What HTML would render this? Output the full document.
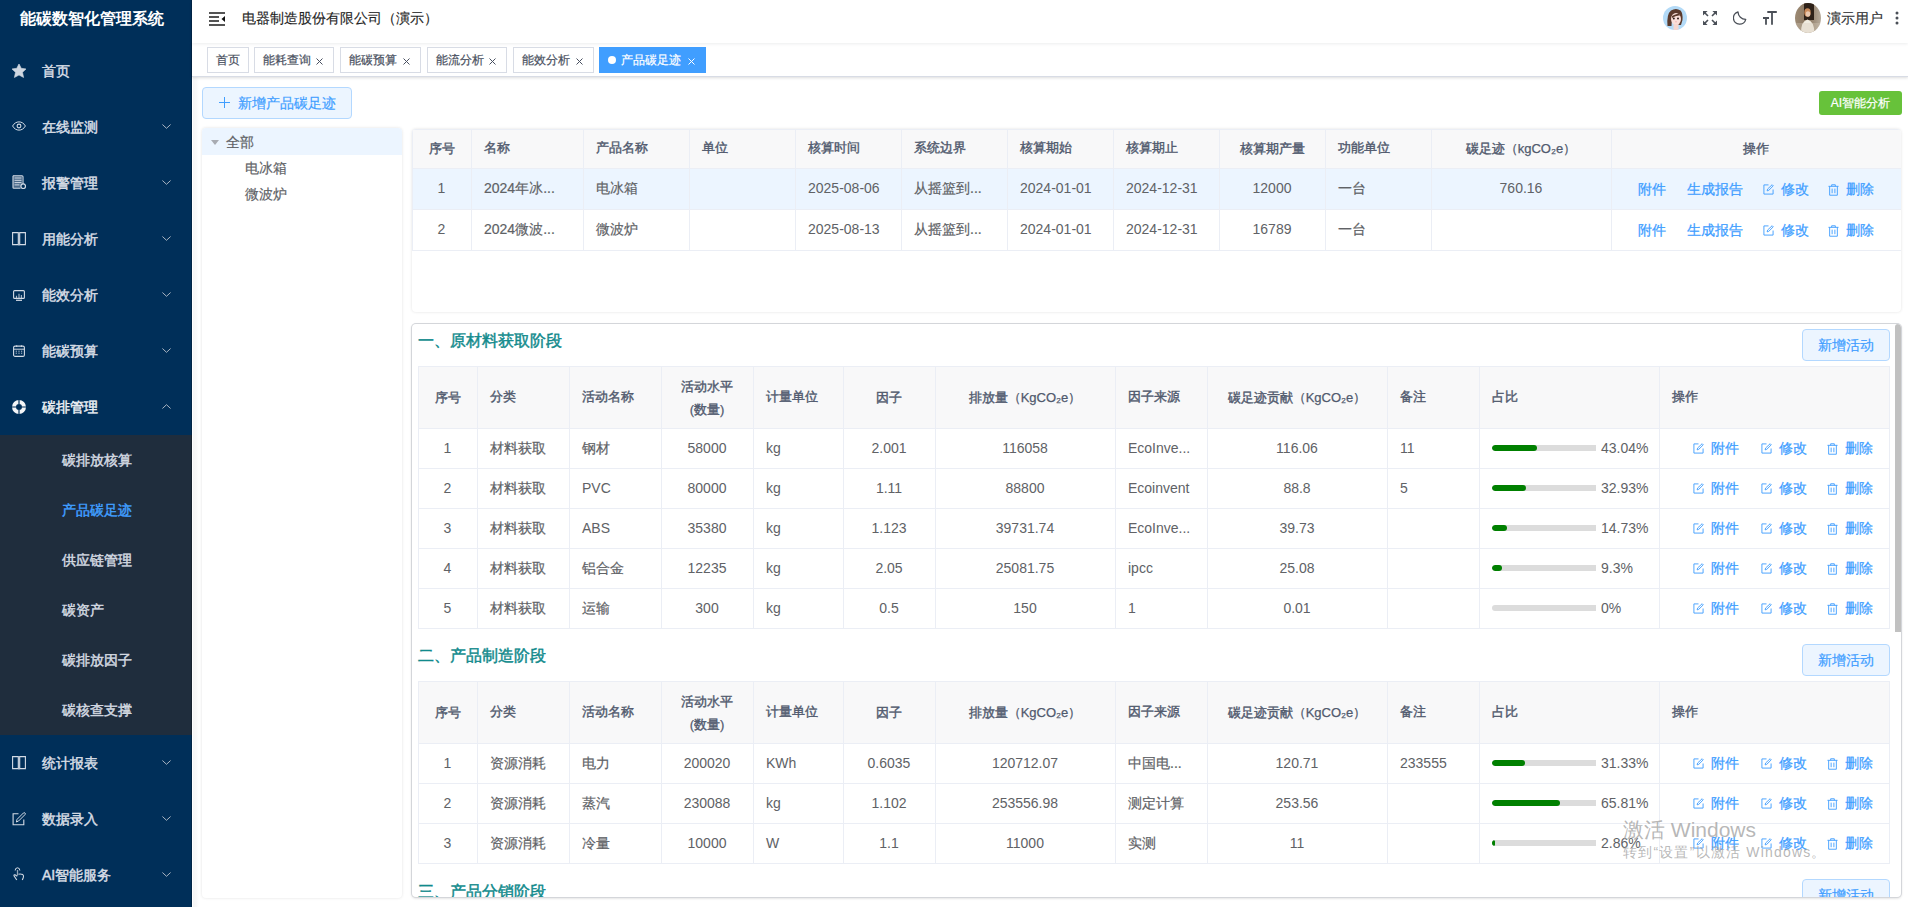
<!DOCTYPE html><html><head><meta charset="utf-8"><style>
*{box-sizing:border-box;margin:0;padding:0}
html,body{width:1908px;height:907px;overflow:hidden;background:#fff;font-family:"Liberation Sans",sans-serif;color:#606266}
.abs{position:absolute}
#side{position:absolute;left:0;top:0;width:192px;height:907px;background:#002f59;color:#bfcbd9}
#side .logo{position:absolute;left:20px;top:1px;height:43px;line-height:36px;color:#fff;font-weight:bold;font-size:16px}
.mi{position:absolute;left:0;width:192px;height:56px;line-height:56px;font-size:14px;color:#e6ecf2}
.mi .tx{-webkit-text-stroke:0.45px currentColor}
.mi .ic{position:absolute;left:12px;top:21px;width:14px;height:14px}
.mi .tx{position:absolute;left:42px;top:0}
.mi .ch{position:absolute;left:161.5px;top:25px;width:9px;height:5px}
#sub{position:absolute;left:0;top:435px;width:192px;height:300px;background:#1f2d3d}
.si{position:absolute;left:62px;height:50px;line-height:50px;font-size:14px;color:#d7dde4;-webkit-text-stroke:0.45px currentColor}
#hdr{position:absolute;left:192px;top:0;width:1716px;height:43px;background:#fff;box-shadow:0 1px 3px rgba(0,21,41,.08);z-index:3}
#tabs{position:absolute;left:192px;top:43px;width:1716px;height:34px;background:#fff;border-bottom:1px solid #d8dce5;box-shadow:0 1px 3px 0 rgba(0,0,0,.12),0 0 3px 0 rgba(0,0,0,.04);z-index:2}
.tab{position:absolute;top:4px;height:26px;line-height:25px;border:1px solid #d8dce5;font-size:12px;color:#495060;background:#fff;padding-left:8px;-webkit-text-stroke:0.2px #495060}
.tab .x{position:absolute;top:10px;width:7px;height:7px}
.tab.act{background:#409eff;border-color:#409eff;color:#fff;-webkit-text-stroke:0.2px #fff}
#main{position:absolute;left:192px;top:77px;width:1716px;height:830px;background:#fff}
.panel{position:absolute;background:#fff;border-radius:4px;box-shadow:0 0 3px rgba(0,0,0,.12)}
table{border-collapse:collapse;table-layout:fixed;font-size:14px}
td,th{border:1px solid #ebeef5;white-space:nowrap;overflow:hidden;padding:0 0 0 12px;text-align:left}
th{background:#f8f8f9;color:#515a6e;font-weight:normal;-webkit-text-stroke:0.4px #515a6e;font-size:13px;padding-bottom:2px}
td{color:#606266}
td.z{-webkit-text-stroke:0.2px #606266}
td.l{padding-bottom:2px}
.c{text-align:center;padding:0 1px 0 0}
.lt{-webkit-text-stroke:0.25px #515a6e}
.lk{color:#409eff;position:relative;top:1px;-webkit-text-stroke:0.25px #409eff}
</style></head><body>
<div id="side"><div class="logo">能碳数智化管理系统</div>
<div id="sub"></div>
<div class="mi" style="top:43px;color:#d8dee6"><svg class="ic" viewBox="0 0 14 14"><path d="M7 -0.2 L9.2 4.3 L14.2 4.9 L10.5 8.3 L11.6 13.5 L7 11 L2.4 13.5 L3.5 8.3 L-0.2 4.9 L4.8 4.3 Z" fill="#cfd7e1" stroke="#cfd7e1" stroke-width="0.6" stroke-linejoin="round"/></svg><span class="tx">首页</span></div>
<div class="mi" style="top:99px;color:#d8dee6"><svg class="ic" style="top:22px;height:10px" viewBox="0 0 14 10"><path d="M0.6 5 C3.5 -0.5 10.5 -0.5 13.4 5 C10.5 10.5 3.5 10.5 0.6 5 Z" fill="none" stroke="#d3dbe5" stroke-width="1"/><circle cx="7" cy="5" r="1.9" fill="none" stroke="#d3dbe5" stroke-width="1.1"/></svg><span class="tx">在线监测</span><svg class="ch" viewBox="0 0 9 5"><path d="M0.4 0.5 L4.5 4.3 L8.6 0.5" fill="none" stroke="#b9c2cd" stroke-width="0.9"/></svg></div>
<div class="mi" style="top:155px;color:#d8dee6"><svg class="ic" style="top:20px;height:14px" viewBox="0 0 14 14"><path d="M1 0.8 H10 Q11 0.8 11 1.8 V9 M1 0.8 V12.5 Q1 13.3 1.8 13.3 H8.5" fill="none" stroke="#d3dbe5" stroke-width="1.1"/><path d="M1 0.8 H10 V9.5 L8.5 13 H1 Z" fill="#d3dbe5" opacity="0.35"/><path d="M2.5 3 H9.5 M2.5 5.3 H9.5 M2.5 7.6 H9.5 M2.5 9.9 H7.5" stroke="#d3dbe5" stroke-width="1"/><circle cx="11.2" cy="11.2" r="2.3" fill="#002f59" stroke="#d3dbe5" stroke-width="1.2"/></svg><span class="tx">报警管理</span><svg class="ch" viewBox="0 0 9 5"><path d="M0.4 0.5 L4.5 4.3 L8.6 0.5" fill="none" stroke="#b9c2cd" stroke-width="0.9"/></svg></div>
<div class="mi" style="top:211px;color:#d8dee6"><svg class="ic" style="top:21px;height:14px" viewBox="0 0 14 14"><path d="M0.6 0.6 H6.3 V12.6 H0.6 Z M7.7 0.6 H13.4 V12.6 H7.7 Z" fill="none" stroke="#d3dbe5" stroke-width="1.1"/><path d="M7 1.3 V13.8" stroke="#d3dbe5" stroke-width="1.1" opacity="0.6"/></svg><span class="tx">用能分析</span><svg class="ch" viewBox="0 0 9 5"><path d="M0.4 0.5 L4.5 4.3 L8.6 0.5" fill="none" stroke="#b9c2cd" stroke-width="0.9"/></svg></div>
<div class="mi" style="top:267px;color:#d8dee6"><svg class="ic" style="left:13px;top:23px;width:12px;height:11px" viewBox="0 0 12 11"><rect x="0.6" y="0.6" width="10.8" height="7.8" rx="1" fill="none" stroke="#d3dbe5" stroke-width="1.1"/><path d="M3 10.3 H9" stroke="#d3dbe5" stroke-width="1.2"/><path d="M3.5 8 V5.8 M6 8 V3.8 M8.4 8 V5" stroke="#d3dbe5" stroke-width="1.1" opacity="0.8"/></svg><span class="tx">能效分析</span><svg class="ch" viewBox="0 0 9 5"><path d="M0.4 0.5 L4.5 4.3 L8.6 0.5" fill="none" stroke="#b9c2cd" stroke-width="0.9"/></svg></div>
<div class="mi" style="top:323px;color:#d8dee6"><svg class="ic" style="left:13px;top:22px;width:12px;height:12px" viewBox="0 0 12 12"><rect x="0.6" y="1.1" width="10.8" height="10.3" rx="1.5" fill="none" stroke="#d3dbe5" stroke-width="1.1"/><path d="M0.6 4.2 H11.4" stroke="#d3dbe5" stroke-width="1"/><path d="M3.7 0.3 V2 M8.4 0.3 V2" stroke="#d3dbe5" stroke-width="1"/><path d="M2.7 6.2 h1.2 M5.4 6.2 h1.2 M8 6.2 h1.2 M2.7 8.2 h1.2 M5.4 8.2 h1.2 M8 8.2 h1.2" stroke="#d3dbe5" stroke-width="0.9"/></svg><span class="tx">能碳预算</span><svg class="ch" viewBox="0 0 9 5"><path d="M0.4 0.5 L4.5 4.3 L8.6 0.5" fill="none" stroke="#b9c2cd" stroke-width="0.9"/></svg></div>
<div class="mi" style="top:379px;color:#eef1f5"><svg class="ic" style="left:12px;top:21px;width:14px;height:14px" viewBox="0 0 14 14"><circle cx="7" cy="7" r="5" fill="none" stroke="#f4f6f8" stroke-width="4"/><path d="M7 0 V4 M7 10 V14 M0 7 H4 M10 7 H14" stroke="#002f59" stroke-width="1.2"/></svg><span class="tx">碳排管理</span><svg class="ch" viewBox="0 0 9 5"><path d="M0.4 4.5 L4.5 0.7 L8.6 4.5" fill="none" stroke="#b9c2cd" stroke-width="0.9"/></svg></div>
<div class="mi" style="top:735px;color:#d8dee6"><svg class="ic" style="top:21px;height:14px" viewBox="0 0 14 14"><path d="M0.6 0.6 H6.3 V12.6 H0.6 Z M7.7 0.6 H13.4 V12.6 H7.7 Z" fill="none" stroke="#d3dbe5" stroke-width="1.1"/><path d="M7 1.3 V13.8" stroke="#d3dbe5" stroke-width="1.1" opacity="0.6"/></svg><span class="tx">统计报表</span><svg class="ch" viewBox="0 0 9 5"><path d="M0.4 0.5 L4.5 4.3 L8.6 0.5" fill="none" stroke="#b9c2cd" stroke-width="0.9"/></svg></div>
<div class="mi" style="top:791px;color:#d8dee6"><svg class="ic" style="top:20px;height:15px" viewBox="0 0 14 15"><path d="M6.5 2.8 H1.1 V13.8 H11.8 V8.5" fill="none" stroke="#d3dbe5" stroke-width="1.1"/><path d="M4.4 11 L5 8.4 L11.4 2 Q12.2 1.2 13 2 Q13.8 2.8 13 3.6 L6.6 10 Z" fill="none" stroke="#d3dbe5" stroke-width="1"/></svg><span class="tx">数据录入</span><svg class="ch" viewBox="0 0 9 5"><path d="M0.4 0.5 L4.5 4.3 L8.6 0.5" fill="none" stroke="#b9c2cd" stroke-width="0.9"/></svg></div>
<div class="mi" style="top:847px;color:#d8dee6"><svg class="ic" style="left:13px;top:20px;width:12px;height:14px" viewBox="0 0 12 14"><path d="M2.2 3.5 Q2 1 4.5 0.8 Q7 1 6.8 3.5" fill="none" stroke="#d3dbe5" stroke-width="1"/><path d="M4.5 3 V8.5" stroke="#d3dbe5" stroke-width="1.3" opacity="0.7"/><path d="M3.8 13 L1 8.8 Q0.8 7.6 2 7.8 L4.3 9.3 M5.5 7.2 Q7.5 6.5 9.8 7.6 Q11 8.5 10.3 10.5 L9.3 13" fill="none" stroke="#d3dbe5" stroke-width="1.1"/></svg><span class="tx">AI智能服务</span><svg class="ch" viewBox="0 0 9 5"><path d="M0.4 0.5 L4.5 4.3 L8.6 0.5" fill="none" stroke="#b9c2cd" stroke-width="0.9"/></svg></div>
<div class="si" style="top:435px;color:#d3d9e1">碳排放核算</div>
<div class="si" style="top:485px;color:#409eff">产品碳足迹</div>
<div class="si" style="top:535px;color:#d3d9e1">供应链管理</div>
<div class="si" style="top:585px;color:#d3d9e1">碳资产</div>
<div class="si" style="top:635px;color:#d3d9e1">碳排放因子</div>
<div class="si" style="top:685px;color:#d3d9e1">碳核查支撑</div>
<div class="abs" style="left:191px;top:0;width:1px;height:907px;background:rgba(0,0,0,.22)"></div>
</div>
<div id="hdr">
<svg class="abs" style="left:17px;top:12px" width="16" height="14" viewBox="0 0 16 14"><path d="M0 1 H16 M0 5 H10 M0 9 H10 M0 13 H16" stroke="#1c1c1c" stroke-width="1.6"/><path d="M16 4 L12.5 7 L16 10 Z" fill="#111"/></svg>
<div class="abs" style="left:50px;top:0;line-height:37px;font-size:14px;color:#1f1f1f;-webkit-text-stroke:0.15px #1f1f1f">电器制造股份有限公司（演示）</div>
<svg class="abs" style="left:1471px;top:6px" width="24" height="24" viewBox="0 0 24 24"><defs><clipPath id="ca"><circle cx="12" cy="12" r="12"/></clipPath></defs><g clip-path="url(#ca)"><rect width="24" height="24" fill="#b3daf7"/><path d="M4.5 20 Q3.5 8 8 4.5 Q13 1.5 17.5 4.5 Q20 7 19.5 14 L18 19 L15 19 Q17.5 12 15 8 Q11 10 9 12 L8.5 20 Z" fill="#5b3a2c"/><ellipse cx="13" cy="13" rx="5" ry="6" fill="#f9ded8"/><path d="M9 10 Q11 8.5 15.5 7.5 Q17.5 9 18 12 L17 9.5 Q13 9 9 12 Z" fill="#5b3a2c"/><circle cx="10.8" cy="12.6" r="1" fill="#2b1a16"/><circle cx="15" cy="12.6" r="1" fill="#2b1a16"/><path d="M12.3 15.8 h1.4" stroke="#e79a9a" stroke-width="0.8"/><rect x="10.5" y="18" width="5" height="6" fill="#f6d7cf"/></g></svg>
<svg class="abs" style="left:1511px;top:11px" width="14" height="14" viewBox="0 0 14 14"><g fill="#4a4f57"><path d="M0 0 H4.6 L0 4.6 Z M14 0 V4.6 L9.4 0 Z M0 14 V9.4 L4.6 14 Z M14 14 H9.4 L14 9.4 Z"/></g><path d="M1.5 1.5 L5 5 M12.5 1.5 L9 5 M1.5 12.5 L5 9 M12.5 12.5 L9 9" stroke="#4a4f57" stroke-width="1.6"/></svg>
<svg class="abs" style="left:1541px;top:11px" width="14" height="14" viewBox="0 0 14 14"><path d="M5 1 A6.2 6.2 0 1 0 12.7 8.3 A7.6 7.6 0 0 1 5 1 Z" fill="none" stroke="#4a4f57" stroke-width="1.3" stroke-linejoin="round"/></svg>
<svg class="abs" style="left:1571px;top:11px" width="15" height="14" viewBox="0 0 15 14"><path d="M4.3 1 H13.8 M9 1 V13.8 M0 7 H6 M3 7 V13.8" fill="none" stroke="#4a4f57" stroke-width="1.8"/></svg>
<svg class="abs" style="left:1603px;top:3px" width="26" height="30" viewBox="0 0 26 30"><defs><clipPath id="cb"><ellipse cx="13" cy="15" rx="13" ry="15"/></clipPath><linearGradient id="gb" x1="0" y1="0" x2="1" y2="0"><stop offset="0" stop-color="#9c8a74"/><stop offset="0.5" stop-color="#8a7660"/><stop offset="1" stop-color="#b7ab9b"/></linearGradient></defs><g clip-path="url(#cb)"><rect width="26" height="30" fill="url(#gb)"/><rect x="9" y="0" width="10" height="17" fill="#2e2118"/><ellipse cx="12.5" cy="9.5" rx="3.2" ry="4.2" fill="#c98a5a"/><ellipse cx="13" cy="11" rx="2.3" ry="2.8" fill="#e8c7ae"/><path d="M6 30 Q6 18 12.5 16.5 Q19 18 19.5 30 Z" fill="#f1ece0"/><rect x="0" y="20" width="26" height="10" fill="#d8ccbb" opacity="0.35"/></g></svg>
<div class="abs" style="left:1635px;top:0;line-height:36px;font-size:14px;color:#303133;-webkit-text-stroke:0.15px #303133">演示用户</div>
<svg class="abs" style="left:1703px;top:11px" width="4" height="14" viewBox="0 0 4 14"><circle cx="2" cy="2" r="1.5" fill="#4a4f57"/><circle cx="2" cy="7" r="1.5" fill="#4a4f57"/><circle cx="2" cy="12" r="1.5" fill="#4a4f57"/></svg>
</div>
<div id="tabs">
<div class="tab" style="left:15px;width:42px">首页</div>
<div class="tab" style="left:62px;width:80px">能耗查询<svg class="x" viewBox="0 0 7 7" style="left:61px"><path d="M0.5 0.5 L6.5 6.5 M6.5 0.5 L0.5 6.5" stroke="#495060" stroke-width="1"/></svg></div>
<div class="tab" style="left:148px;width:81px">能碳预算<svg class="x" viewBox="0 0 7 7" style="left:62px"><path d="M0.5 0.5 L6.5 6.5 M6.5 0.5 L0.5 6.5" stroke="#495060" stroke-width="1"/></svg></div>
<div class="tab" style="left:235px;width:80px">能流分析<svg class="x" viewBox="0 0 7 7" style="left:61px"><path d="M0.5 0.5 L6.5 6.5 M6.5 0.5 L0.5 6.5" stroke="#495060" stroke-width="1"/></svg></div>
<div class="tab" style="left:321px;width:81px">能效分析<svg class="x" viewBox="0 0 7 7" style="left:62px"><path d="M0.5 0.5 L6.5 6.5 M6.5 0.5 L0.5 6.5" stroke="#495060" stroke-width="1"/></svg></div>
<div class="tab act" style="left:407px;width:107px"><span style="display:inline-block;width:8px;height:8px;border-radius:50%;background:#fff;margin-right:5px;vertical-align:0"></span>产品碳足迹<svg class="x" viewBox="0 0 7 7" style="left:88px"><path d="M0.5 0.5 L6.5 6.5 M6.5 0.5 L0.5 6.5" stroke="#fff" stroke-width="1"/></svg></div>
</div>
<div id="main"></div>
<div class="abs" style="left:193px;top:77px;width:6px;height:830px;background:linear-gradient(90deg,#f5f5f5,#f9f9f9 60%,#fff)"></div>
<div class="abs" style="left:202px;top:87px;width:150px;height:32px;border:1px solid #b3d8ff;background:#ecf5ff;border-radius:4px;color:#409eff;font-size:14px;line-height:30px;-webkit-text-stroke:0.2px #409eff"><svg class="abs" style="left:16px;top:9px" width="11" height="11" viewBox="0 0 11 11"><path d="M5.5 0 V11 M0 5.5 H11" stroke="#409eff" stroke-width="1"/></svg><span class="abs" style="left:35px;top:0">新增产品碳足迹</span></div>
<div class="abs" style="left:1819px;top:91px;width:83px;height:24px;background:#67c23a;border-radius:3px;color:#fff;font-size:12px;line-height:24px;text-align:center;-webkit-text-stroke:0.2px #fff">AI智能分析</div>
<div class="panel" style="left:202px;top:128px;width:200px;height:770px"><div class="abs" style="left:0;top:0;width:200px;height:27px;background:#ecf5ff;border-radius:4px 4px 0 0"></div><svg class="abs" style="left:8.5px;top:12px" width="8" height="5" viewBox="0 0 8 5"><path d="M0 0 H8 L4 5 Z" fill="#a8abb2"/></svg><div class="abs" style="left:24px;top:1px;line-height:26px;font-size:14px;color:#606266;-webkit-text-stroke:0.2px #606266">全部</div><div class="abs" style="left:43px;top:27px;line-height:26px;font-size:14px;color:#606266;-webkit-text-stroke:0.2px #606266">电冰箱</div><div class="abs" style="left:43px;top:53px;line-height:26px;font-size:14px;color:#606266;-webkit-text-stroke:0.2px #606266">微波炉</div></div>
<div class="panel" style="left:412px;top:129px;width:1489px;height:183px;overflow:hidden;border-radius:4px">
<table style="position:absolute;left:0;top:0;width:1489px"><colgroup><col style="width:59px"><col style="width:112px"><col style="width:106px"><col style="width:106px"><col style="width:106px"><col style="width:106px"><col style="width:106px"><col style="width:106px"><col style="width:106px"><col style="width:106px"><col style="width:180px"><col style="width:290px"></colgroup>
<tr style="height:39px"><th class="c">序号</th><th class="">名称</th><th class="">产品名称</th><th class="">单位</th><th class="">核算时间</th><th class="">系统边界</th><th class="">核算期始</th><th class="">核算期止</th><th class="c">核算期产量</th><th class="">功能单位</th><th class="c">碳足迹<span class="lt">（kgCO₂e）</span></th><th class="c">操作</th></tr>
<tr style="height:41px;background:#ecf5ff;"><td class="c l">1</td><td class="z">2024年冰...</td><td class="z">电冰箱</td><td class=""></td><td class="l">2025-08-06</td><td class="z">从摇篮到...</td><td class="l">2024-01-01</td><td class="l">2024-12-31</td><td class="c l">12000</td><td class="z">一台</td><td class="c l">760.16</td><td class="c"><span class="lk">附件</span><span class="lk" style="margin-left:21px">生成报告</span><span class="lk" style="margin-left:20px"><svg width="11" height="11" viewBox="0 0 12 12" style="vertical-align:-1px;margin-right:7px"><path d="M6 1 H1 V11 H11 V6" fill="none" stroke="#409eff" stroke-width="1"/><path d="M4.5 7.5 L5 5.5 L10 0.8 L11.2 2 L6.3 6.9 Z" fill="none" stroke="#409eff" stroke-width="1"/></svg>修改</span><span class="lk" style="margin-left:19px"><svg width="11" height="12" viewBox="0 0 12 13" style="vertical-align:-2px;margin-right:7px"><path d="M0.5 2.5 H11.5 M4 2.5 V0.8 H8 V2.5 M1.8 2.5 V12.2 H10.2 V2.5 M4.5 5 V10 M7.5 5 V10" fill="none" stroke="#409eff" stroke-width="1"/></svg>删除</span></td></tr>
<tr style="height:41px;"><td class="c l">2</td><td class="z">2024微波...</td><td class="z">微波炉</td><td class=""></td><td class="l">2025-08-13</td><td class="z">从摇篮到...</td><td class="l">2024-01-01</td><td class="l">2024-12-31</td><td class="c l">16789</td><td class="z">一台</td><td class="c"></td><td class="c"><span class="lk">附件</span><span class="lk" style="margin-left:21px">生成报告</span><span class="lk" style="margin-left:20px"><svg width="11" height="11" viewBox="0 0 12 12" style="vertical-align:-1px;margin-right:7px"><path d="M6 1 H1 V11 H11 V6" fill="none" stroke="#409eff" stroke-width="1"/><path d="M4.5 7.5 L5 5.5 L10 0.8 L11.2 2 L6.3 6.9 Z" fill="none" stroke="#409eff" stroke-width="1"/></svg>修改</span><span class="lk" style="margin-left:19px"><svg width="11" height="12" viewBox="0 0 12 13" style="vertical-align:-2px;margin-right:7px"><path d="M0.5 2.5 H11.5 M4 2.5 V0.8 H8 V2.5 M1.8 2.5 V12.2 H10.2 V2.5 M4.5 5 V10 M7.5 5 V10" fill="none" stroke="#409eff" stroke-width="1"/></svg>删除</span></td></tr>
</table></div>
<div class="panel" style="left:412px;top:324px;width:1489px;height:573px;overflow:hidden;box-shadow:0 0 0 1px #d4d6da, 0 1px 3px rgba(0,0,0,.2)">
<div class="abs" style="left:6px;top:1px;line-height:32px;font-size:16px;color:#118a8c;-webkit-text-stroke:0.45px #118a8c">一、原材料获取阶段</div>
<div class="abs" style="left:1390px;top:5px;width:88px;height:32px;border:1px solid #b3d8ff;background:#ecf5ff;border-radius:4px;color:#409eff;font-size:14px;line-height:30px;text-align:center;-webkit-text-stroke:0.2px #409eff">新增活动</div>
<table style="position:absolute;left:6px;top:42px;width:1471px"><colgroup><col style="width:59px"><col style="width:92px"><col style="width:92px"><col style="width:92px"><col style="width:90px"><col style="width:92px"><col style="width:180px"><col style="width:92px"><col style="width:180px"><col style="width:92px"><col style="width:180px"><col style="width:230px"></colgroup>
<tr style="height:62px"><th class="c" style="line-height:23px">序号</th><th class="" style="line-height:23px">分类</th><th class="" style="line-height:23px">活动名称</th><th class="c" style="line-height:23px">活动水平<br><span class="lt">(</span>数量<span class="lt">)</span></th><th class="" style="line-height:23px">计量单位</th><th class="c" style="line-height:23px">因子</th><th class="c" style="line-height:23px">排放量<span class="lt">（KgCO₂e）</span></th><th class="" style="line-height:23px">因子来源</th><th class="c" style="line-height:23px">碳足迹贡献<span class="lt">（KgCO₂e）</span></th><th class="" style="line-height:23px">备注</th><th class="" style="line-height:23px">占比</th><th class="" style="line-height:23px">操作</th></tr>
<tr style="height:40px"><td class="c l">1</td><td class="z">材料获取</td><td class="z">钢材</td><td class="c l">58000</td><td class="l">kg</td><td class="c l">2.001</td><td class="c l">116058</td><td class="l">EcoInve...</td><td class="c l">116.06</td><td class="l">11</td><td style="padding-left:12px"><div style="position:relative;height:38px"><div class="abs" style="left:0;top:15px;width:104px;height:6px;border-radius:3px 0 0 3px;background:#dcdcdc;overflow:hidden"><div style="width:45px;height:6px;border-radius:3px;background:#008000"></div></div><span class="abs" style="left:109px;top:-1px;line-height:38px">43.04%</span></div></td><td style="padding:0"><span class="lk" style="margin-left:33px;top:0"><svg width="11" height="11" viewBox="0 0 12 12" style="vertical-align:-1px;margin-right:7px"><path d="M6 1 H1 V11 H11 V6" fill="none" stroke="#409eff" stroke-width="1"/><path d="M4.5 7.5 L5 5.5 L10 0.8 L11.2 2 L6.3 6.9 Z" fill="none" stroke="#409eff" stroke-width="1"/></svg>附件</span><span class="lk" style="margin-left:22px;top:0"><svg width="11" height="11" viewBox="0 0 12 12" style="vertical-align:-1px;margin-right:7px"><path d="M6 1 H1 V11 H11 V6" fill="none" stroke="#409eff" stroke-width="1"/><path d="M4.5 7.5 L5 5.5 L10 0.8 L11.2 2 L6.3 6.9 Z" fill="none" stroke="#409eff" stroke-width="1"/></svg>修改</span><span class="lk" style="margin-left:20px;top:0"><svg width="11" height="12" viewBox="0 0 12 13" style="vertical-align:-2px;margin-right:7px"><path d="M0.5 2.5 H11.5 M4 2.5 V0.8 H8 V2.5 M1.8 2.5 V12.2 H10.2 V2.5 M4.5 5 V10 M7.5 5 V10" fill="none" stroke="#409eff" stroke-width="1"/></svg>删除</span></td></tr>
<tr style="height:40px"><td class="c l">2</td><td class="z">材料获取</td><td class="l">PVC</td><td class="c l">80000</td><td class="l">kg</td><td class="c l">1.11</td><td class="c l">88800</td><td class="l">Ecoinvent</td><td class="c l">88.8</td><td class="l">5</td><td style="padding-left:12px"><div style="position:relative;height:38px"><div class="abs" style="left:0;top:15px;width:104px;height:6px;border-radius:3px 0 0 3px;background:#dcdcdc;overflow:hidden"><div style="width:34px;height:6px;border-radius:3px;background:#008000"></div></div><span class="abs" style="left:109px;top:-1px;line-height:38px">32.93%</span></div></td><td style="padding:0"><span class="lk" style="margin-left:33px;top:0"><svg width="11" height="11" viewBox="0 0 12 12" style="vertical-align:-1px;margin-right:7px"><path d="M6 1 H1 V11 H11 V6" fill="none" stroke="#409eff" stroke-width="1"/><path d="M4.5 7.5 L5 5.5 L10 0.8 L11.2 2 L6.3 6.9 Z" fill="none" stroke="#409eff" stroke-width="1"/></svg>附件</span><span class="lk" style="margin-left:22px;top:0"><svg width="11" height="11" viewBox="0 0 12 12" style="vertical-align:-1px;margin-right:7px"><path d="M6 1 H1 V11 H11 V6" fill="none" stroke="#409eff" stroke-width="1"/><path d="M4.5 7.5 L5 5.5 L10 0.8 L11.2 2 L6.3 6.9 Z" fill="none" stroke="#409eff" stroke-width="1"/></svg>修改</span><span class="lk" style="margin-left:20px;top:0"><svg width="11" height="12" viewBox="0 0 12 13" style="vertical-align:-2px;margin-right:7px"><path d="M0.5 2.5 H11.5 M4 2.5 V0.8 H8 V2.5 M1.8 2.5 V12.2 H10.2 V2.5 M4.5 5 V10 M7.5 5 V10" fill="none" stroke="#409eff" stroke-width="1"/></svg>删除</span></td></tr>
<tr style="height:40px"><td class="c l">3</td><td class="z">材料获取</td><td class="l">ABS</td><td class="c l">35380</td><td class="l">kg</td><td class="c l">1.123</td><td class="c l">39731.74</td><td class="l">EcoInve...</td><td class="c l">39.73</td><td class=""></td><td style="padding-left:12px"><div style="position:relative;height:38px"><div class="abs" style="left:0;top:15px;width:104px;height:6px;border-radius:3px 0 0 3px;background:#dcdcdc;overflow:hidden"><div style="width:15px;height:6px;border-radius:3px;background:#008000"></div></div><span class="abs" style="left:109px;top:-1px;line-height:38px">14.73%</span></div></td><td style="padding:0"><span class="lk" style="margin-left:33px;top:0"><svg width="11" height="11" viewBox="0 0 12 12" style="vertical-align:-1px;margin-right:7px"><path d="M6 1 H1 V11 H11 V6" fill="none" stroke="#409eff" stroke-width="1"/><path d="M4.5 7.5 L5 5.5 L10 0.8 L11.2 2 L6.3 6.9 Z" fill="none" stroke="#409eff" stroke-width="1"/></svg>附件</span><span class="lk" style="margin-left:22px;top:0"><svg width="11" height="11" viewBox="0 0 12 12" style="vertical-align:-1px;margin-right:7px"><path d="M6 1 H1 V11 H11 V6" fill="none" stroke="#409eff" stroke-width="1"/><path d="M4.5 7.5 L5 5.5 L10 0.8 L11.2 2 L6.3 6.9 Z" fill="none" stroke="#409eff" stroke-width="1"/></svg>修改</span><span class="lk" style="margin-left:20px;top:0"><svg width="11" height="12" viewBox="0 0 12 13" style="vertical-align:-2px;margin-right:7px"><path d="M0.5 2.5 H11.5 M4 2.5 V0.8 H8 V2.5 M1.8 2.5 V12.2 H10.2 V2.5 M4.5 5 V10 M7.5 5 V10" fill="none" stroke="#409eff" stroke-width="1"/></svg>删除</span></td></tr>
<tr style="height:40px"><td class="c l">4</td><td class="z">材料获取</td><td class="z">铝合金</td><td class="c l">12235</td><td class="l">kg</td><td class="c l">2.05</td><td class="c l">25081.75</td><td class="l">ipcc</td><td class="c l">25.08</td><td class=""></td><td style="padding-left:12px"><div style="position:relative;height:38px"><div class="abs" style="left:0;top:15px;width:104px;height:6px;border-radius:3px 0 0 3px;background:#dcdcdc;overflow:hidden"><div style="width:10px;height:6px;border-radius:3px;background:#008000"></div></div><span class="abs" style="left:109px;top:-1px;line-height:38px">9.3%</span></div></td><td style="padding:0"><span class="lk" style="margin-left:33px;top:0"><svg width="11" height="11" viewBox="0 0 12 12" style="vertical-align:-1px;margin-right:7px"><path d="M6 1 H1 V11 H11 V6" fill="none" stroke="#409eff" stroke-width="1"/><path d="M4.5 7.5 L5 5.5 L10 0.8 L11.2 2 L6.3 6.9 Z" fill="none" stroke="#409eff" stroke-width="1"/></svg>附件</span><span class="lk" style="margin-left:22px;top:0"><svg width="11" height="11" viewBox="0 0 12 12" style="vertical-align:-1px;margin-right:7px"><path d="M6 1 H1 V11 H11 V6" fill="none" stroke="#409eff" stroke-width="1"/><path d="M4.5 7.5 L5 5.5 L10 0.8 L11.2 2 L6.3 6.9 Z" fill="none" stroke="#409eff" stroke-width="1"/></svg>修改</span><span class="lk" style="margin-left:20px;top:0"><svg width="11" height="12" viewBox="0 0 12 13" style="vertical-align:-2px;margin-right:7px"><path d="M0.5 2.5 H11.5 M4 2.5 V0.8 H8 V2.5 M1.8 2.5 V12.2 H10.2 V2.5 M4.5 5 V10 M7.5 5 V10" fill="none" stroke="#409eff" stroke-width="1"/></svg>删除</span></td></tr>
<tr style="height:40px"><td class="c l">5</td><td class="z">材料获取</td><td class="z">运输</td><td class="c l">300</td><td class="l">kg</td><td class="c l">0.5</td><td class="c l">150</td><td class="l">1</td><td class="c l">0.01</td><td class=""></td><td style="padding-left:12px"><div style="position:relative;height:38px"><div class="abs" style="left:0;top:15px;width:104px;height:6px;border-radius:3px 0 0 3px;background:#dcdcdc;overflow:hidden"><div style="width:0px;height:6px;border-radius:3px;background:#008000"></div></div><span class="abs" style="left:109px;top:-1px;line-height:38px">0%</span></div></td><td style="padding:0"><span class="lk" style="margin-left:33px;top:0"><svg width="11" height="11" viewBox="0 0 12 12" style="vertical-align:-1px;margin-right:7px"><path d="M6 1 H1 V11 H11 V6" fill="none" stroke="#409eff" stroke-width="1"/><path d="M4.5 7.5 L5 5.5 L10 0.8 L11.2 2 L6.3 6.9 Z" fill="none" stroke="#409eff" stroke-width="1"/></svg>附件</span><span class="lk" style="margin-left:22px;top:0"><svg width="11" height="11" viewBox="0 0 12 12" style="vertical-align:-1px;margin-right:7px"><path d="M6 1 H1 V11 H11 V6" fill="none" stroke="#409eff" stroke-width="1"/><path d="M4.5 7.5 L5 5.5 L10 0.8 L11.2 2 L6.3 6.9 Z" fill="none" stroke="#409eff" stroke-width="1"/></svg>修改</span><span class="lk" style="margin-left:20px;top:0"><svg width="11" height="12" viewBox="0 0 12 13" style="vertical-align:-2px;margin-right:7px"><path d="M0.5 2.5 H11.5 M4 2.5 V0.8 H8 V2.5 M1.8 2.5 V12.2 H10.2 V2.5 M4.5 5 V10 M7.5 5 V10" fill="none" stroke="#409eff" stroke-width="1"/></svg>删除</span></td></tr>
</table>
<div class="abs" style="left:6px;top:316px;line-height:32px;font-size:16px;color:#118a8c;-webkit-text-stroke:0.45px #118a8c">二、产品制造阶段</div>
<div class="abs" style="left:1390px;top:320px;width:88px;height:32px;border:1px solid #b3d8ff;background:#ecf5ff;border-radius:4px;color:#409eff;font-size:14px;line-height:30px;text-align:center;-webkit-text-stroke:0.2px #409eff">新增活动</div>
<table style="position:absolute;left:6px;top:357px;width:1471px"><colgroup><col style="width:59px"><col style="width:92px"><col style="width:92px"><col style="width:92px"><col style="width:90px"><col style="width:92px"><col style="width:180px"><col style="width:92px"><col style="width:180px"><col style="width:92px"><col style="width:180px"><col style="width:230px"></colgroup>
<tr style="height:62px"><th class="c" style="line-height:23px">序号</th><th class="" style="line-height:23px">分类</th><th class="" style="line-height:23px">活动名称</th><th class="c" style="line-height:23px">活动水平<br><span class="lt">(</span>数量<span class="lt">)</span></th><th class="" style="line-height:23px">计量单位</th><th class="c" style="line-height:23px">因子</th><th class="c" style="line-height:23px">排放量<span class="lt">（KgCO₂e）</span></th><th class="" style="line-height:23px">因子来源</th><th class="c" style="line-height:23px">碳足迹贡献<span class="lt">（KgCO₂e）</span></th><th class="" style="line-height:23px">备注</th><th class="" style="line-height:23px">占比</th><th class="" style="line-height:23px">操作</th></tr>
<tr style="height:40px"><td class="c l">1</td><td class="z">资源消耗</td><td class="z">电力</td><td class="c l">200020</td><td class="l">KWh</td><td class="c l">0.6035</td><td class="c l">120712.07</td><td class="z">中国电...</td><td class="c l">120.71</td><td class="l">233555</td><td style="padding-left:12px"><div style="position:relative;height:38px"><div class="abs" style="left:0;top:15px;width:104px;height:6px;border-radius:3px 0 0 3px;background:#dcdcdc;overflow:hidden"><div style="width:33px;height:6px;border-radius:3px;background:#008000"></div></div><span class="abs" style="left:109px;top:-1px;line-height:38px">31.33%</span></div></td><td style="padding:0"><span class="lk" style="margin-left:33px;top:0"><svg width="11" height="11" viewBox="0 0 12 12" style="vertical-align:-1px;margin-right:7px"><path d="M6 1 H1 V11 H11 V6" fill="none" stroke="#409eff" stroke-width="1"/><path d="M4.5 7.5 L5 5.5 L10 0.8 L11.2 2 L6.3 6.9 Z" fill="none" stroke="#409eff" stroke-width="1"/></svg>附件</span><span class="lk" style="margin-left:22px;top:0"><svg width="11" height="11" viewBox="0 0 12 12" style="vertical-align:-1px;margin-right:7px"><path d="M6 1 H1 V11 H11 V6" fill="none" stroke="#409eff" stroke-width="1"/><path d="M4.5 7.5 L5 5.5 L10 0.8 L11.2 2 L6.3 6.9 Z" fill="none" stroke="#409eff" stroke-width="1"/></svg>修改</span><span class="lk" style="margin-left:20px;top:0"><svg width="11" height="12" viewBox="0 0 12 13" style="vertical-align:-2px;margin-right:7px"><path d="M0.5 2.5 H11.5 M4 2.5 V0.8 H8 V2.5 M1.8 2.5 V12.2 H10.2 V2.5 M4.5 5 V10 M7.5 5 V10" fill="none" stroke="#409eff" stroke-width="1"/></svg>删除</span></td></tr>
<tr style="height:40px"><td class="c l">2</td><td class="z">资源消耗</td><td class="z">蒸汽</td><td class="c l">230088</td><td class="l">kg</td><td class="c l">1.102</td><td class="c l">253556.98</td><td class="z">测定计算</td><td class="c l">253.56</td><td class=""></td><td style="padding-left:12px"><div style="position:relative;height:38px"><div class="abs" style="left:0;top:15px;width:104px;height:6px;border-radius:3px 0 0 3px;background:#dcdcdc;overflow:hidden"><div style="width:68px;height:6px;border-radius:3px;background:#008000"></div></div><span class="abs" style="left:109px;top:-1px;line-height:38px">65.81%</span></div></td><td style="padding:0"><span class="lk" style="margin-left:33px;top:0"><svg width="11" height="11" viewBox="0 0 12 12" style="vertical-align:-1px;margin-right:7px"><path d="M6 1 H1 V11 H11 V6" fill="none" stroke="#409eff" stroke-width="1"/><path d="M4.5 7.5 L5 5.5 L10 0.8 L11.2 2 L6.3 6.9 Z" fill="none" stroke="#409eff" stroke-width="1"/></svg>附件</span><span class="lk" style="margin-left:22px;top:0"><svg width="11" height="11" viewBox="0 0 12 12" style="vertical-align:-1px;margin-right:7px"><path d="M6 1 H1 V11 H11 V6" fill="none" stroke="#409eff" stroke-width="1"/><path d="M4.5 7.5 L5 5.5 L10 0.8 L11.2 2 L6.3 6.9 Z" fill="none" stroke="#409eff" stroke-width="1"/></svg>修改</span><span class="lk" style="margin-left:20px;top:0"><svg width="11" height="12" viewBox="0 0 12 13" style="vertical-align:-2px;margin-right:7px"><path d="M0.5 2.5 H11.5 M4 2.5 V0.8 H8 V2.5 M1.8 2.5 V12.2 H10.2 V2.5 M4.5 5 V10 M7.5 5 V10" fill="none" stroke="#409eff" stroke-width="1"/></svg>删除</span></td></tr>
<tr style="height:40px"><td class="c l">3</td><td class="z">资源消耗</td><td class="z">冷量</td><td class="c l">10000</td><td class="l">W</td><td class="c l">1.1</td><td class="c l">11000</td><td class="z">实测</td><td class="c l">11</td><td class=""></td><td style="padding-left:12px"><div style="position:relative;height:38px"><div class="abs" style="left:0;top:15px;width:104px;height:6px;border-radius:3px 0 0 3px;background:#dcdcdc;overflow:hidden"><div style="width:3px;height:6px;border-radius:3px;background:#008000"></div></div><span class="abs" style="left:109px;top:-1px;line-height:38px">2.86%</span></div></td><td style="padding:0"><span class="lk" style="margin-left:33px;top:0"><svg width="11" height="11" viewBox="0 0 12 12" style="vertical-align:-1px;margin-right:7px"><path d="M6 1 H1 V11 H11 V6" fill="none" stroke="#409eff" stroke-width="1"/><path d="M4.5 7.5 L5 5.5 L10 0.8 L11.2 2 L6.3 6.9 Z" fill="none" stroke="#409eff" stroke-width="1"/></svg>附件</span><span class="lk" style="margin-left:22px;top:0"><svg width="11" height="11" viewBox="0 0 12 12" style="vertical-align:-1px;margin-right:7px"><path d="M6 1 H1 V11 H11 V6" fill="none" stroke="#409eff" stroke-width="1"/><path d="M4.5 7.5 L5 5.5 L10 0.8 L11.2 2 L6.3 6.9 Z" fill="none" stroke="#409eff" stroke-width="1"/></svg>修改</span><span class="lk" style="margin-left:20px;top:0"><svg width="11" height="12" viewBox="0 0 12 13" style="vertical-align:-2px;margin-right:7px"><path d="M0.5 2.5 H11.5 M4 2.5 V0.8 H8 V2.5 M1.8 2.5 V12.2 H10.2 V2.5 M4.5 5 V10 M7.5 5 V10" fill="none" stroke="#409eff" stroke-width="1"/></svg>删除</span></td></tr>
</table>
<div class="abs" style="left:6px;top:552px;line-height:32px;font-size:16px;color:#118a8c;-webkit-text-stroke:0.45px #118a8c">三、产品分销阶段</div>
<div class="abs" style="left:1390px;top:555px;width:88px;height:32px;border:1px solid #b3d8ff;background:#ecf5ff;border-radius:4px;color:#409eff;font-size:14px;line-height:30px;text-align:center;-webkit-text-stroke:0.2px #409eff">新增活动</div>
<div class="abs" style="left:1483px;top:0;width:6px;height:308px;background:#c1c1c1;border-radius:3px 3px 0 0"></div>
</div>
<div class="abs" style="left:1623px;top:817px;font-size:21px;line-height:26px;color:rgba(160,160,160,.75);white-space:nowrap">激活 Windows</div>
<div class="abs" style="left:1623px;top:843px;font-size:14px;line-height:18px;color:rgba(160,160,160,.75);white-space:nowrap;letter-spacing:1.2px">转到“设置”以激活 Windows。</div>
</body></html>
